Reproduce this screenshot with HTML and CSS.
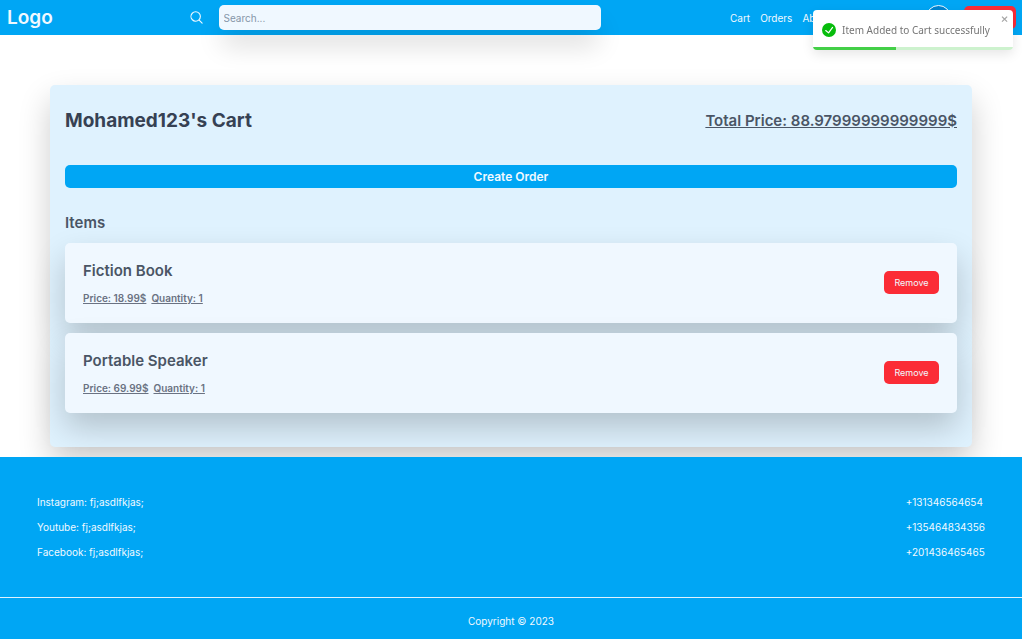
FILE: index.html
```html
<!DOCTYPE html>
<html lang="en">
<head>
<meta charset="utf-8">
<title>Cart</title>
<link rel="stylesheet" href="styles.css">
</head>
<body>
<header class="navbar">
  <a class="logo" href="#">Logo</a>
  <form class="search">
    <label class="search-label" for="search" aria-label="Search">
      <svg class="search-icon" viewBox="0 0 24 24" fill="none" stroke="currentColor" stroke-width="1.8" stroke-linecap="round" stroke-linejoin="round"><path d="M21 21l-5.2-5.2m0 0A7.5 7.5 0 1 0 5.200 5.200a7.500 7.500 0 0 0 10.600 10.600z"/></svg>
    </label>
    <input class="search-input" id="search" type="text" placeholder="Search...">
  </form>
  <nav class="nav">
    <div class="links">
      <a href="#">Cart</a>
      <a href="#">Orders</a>
      <a href="#">About</a>
    </div>
    <span class="avatar"></span>
    <button class="btn logout" type="button" aria-label="Log out"></button>
  </nav>
</header>
<main class="cart">
  <div class="cart-head">
    <h1 class="title">Mohamed123's Cart</h1>
    <p class="total">Total Price: 88.97999999999999$</p>
  </div>
  <button class="create" type="button">Create Order</button>
  <h2 class="subtitle">Items</h2>
  <ul class="items">
    <li class="item">
      <div>
        <h3 class="item-name">Fiction Book</h3>
        <p class="meta"><span>Price: 18.99$</span><span>Quantity: 1</span></p>
      </div>
      <button class="btn" type="button">Remove</button>
    </li>
    <li class="item">
      <div>
        <h3 class="item-name">Portable Speaker</h3>
        <p class="meta"><span>Price: 69.99$</span><span>Quantity: 1</span></p>
      </div>
      <button class="btn" type="button">Remove</button>
    </li>
  </ul>
</main>
<footer class="footer">
  <div class="contacts">
    <ul class="contact-list">
      <li>Instagram: fj;asdlfkjas;</li>
      <li>Youtube: fj;asdlfkjas;</li>
      <li>Facebook: fj;asdlfkjas;</li>
    </ul>
    <ul class="contact-list">
      <li>+131346564654</li>
      <li>+135464834356</li>
      <li>+201436465465</li>
    </ul>
  </div>
  <p class="copyright">Copyright © 2023</p>
</footer>
<div class="toast" role="alert">
  <svg class="toast-icon" viewBox="0 0 24 24"><path fill="#07bc0c" d="M12 0a12 12 0 1 0 12 12A12.014 12.014 0 0 0 12 0zm6.927 8.200l-6.845 9.289a1.011 1.011 0 0 1-1.430.188l-4.888-3.908a1 1 0 1 1 1.250-1.562l4.076 3.261 6.227-8.451a1 1 0 1 1 1.610 1.183z"/></svg>
  <span class="toast-text">Item Added to Cart successfully</span>
  <button class="toast-close" type="button" aria-label="Close"><svg viewBox="0 0 14 16"><path fill="currentColor" fill-rule="evenodd" d="M7.710 8.230l3.750 3.750-1.480 1.480-3.750-3.750-3.750 3.750L1 11.980l3.750-3.750L1 4.480 2.480 3l3.750 3.750L9.980 3l1.480 1.480-3.750 3.750z"/></svg></button>
  <div class="toast-progress"></div>
</div>
</body>
</html>
```

FILE: styles.css
```css
* {
  box-sizing: border-box;
  margin: 0;
  padding: 0;
}

body {
  font-family: Inter, "Liberation Sans", sans-serif;
  font-size: 10px;
  line-height: 15px;
  color: #4a5565;
  background: #fff;
}

a {
  color: inherit;
  text-decoration: none;
}

ul {
  list-style: none;
}

button {
  border: 0;
  font-family: inherit;
  cursor: pointer;
}

.navbar {
  display: flex;
  align-items: center;
  justify-content: space-between;
  height: 35px;
  padding: 0 6px 0 7px;
  background: #00a6f4;
  color: #f0f9ff;
}

.logo {
  width: 52px;
  font-size: 19px;
  line-height: 25px;
  font-weight: 600;
}

.search {
  display: flex;
  align-items: center;
  gap: 15px;
  width: 412px;
  max-width: 41%;
}

.search-icon {
  display: block;
  width: 15px;
  height: 15px;
}

.search-input {
  flex: 1;
  min-width: 0;
  height: 25px;
  padding: 0 5px;
  border: 0;
  border-radius: 5px;
  background: #f0f8ff;
  color: #4a5565;
  font-family: inherit;
  font-size: 10px;
  box-shadow: 0 18px 26px -3px rgba(0, 0, 0, .15);
}

.search-input::placeholder {
  color: #8696a8;
}

.nav {
  display: flex;
  align-items: center;
  width: 286px;
}

.links {
  display: flex;
  gap: 10px;
  flex: 1;
  padding-top: 2px;
}

.avatar {
  width: 25px;
  height: 25px;
  margin-right: 13px;
  border: 1px solid #f0f9ff;
  border-radius: 50%;
  background: #0084d1;
}

.btn {
  height: 23px;
  padding: 0 10px;
  border-radius: 5px;
  background: #fb2c36;
  color: #f0f9ff;
  font-size: 9px;
  line-height: 13px;
  min-width: 55px;
}

.logout {
  min-width: 52px;
}

.cart {
  margin: 50px 50px 10px;
  padding: 20px 15px 34px;
  border-radius: 5px;
  background: #dff2fe;
  box-shadow: 0 15px 32px rgba(0, 0, 0, .2);
}

.cart-head {
  display: flex;
  align-items: center;
  justify-content: space-between;
  margin-bottom: 28px;
}

.title {
  font-size: 19px;
  line-height: 32px;
  font-weight: 700;
  color: #364153;
}

.total {
  font-size: 15px;
  line-height: 20px;
  font-weight: 600;
  text-decoration: underline;
}

.create {
  display: block;
  width: 100%;
  height: 23px;
  border-radius: 5px;
  background: #00a6f4;
  color: #f0f9ff;
  font-size: 12px;
  font-weight: 600;
}

.subtitle {
  margin: 25px 0 10px;
  font-size: 15px;
  line-height: 20px;
  font-weight: 600;
}

.items {
  display: grid;
  gap: 10px;
}

.item {
  display: flex;
  align-items: center;
  justify-content: space-between;
  padding: 18px 18px 17px;
  border-radius: 5px;
  background: #f0f8ff;
  box-shadow: 0 15px 32px rgba(0, 0, 0, .2);
}

.item .btn {
  margin-bottom: 2px;
}

.item-name {
  margin-bottom: 10px;
  font-size: 15px;
  line-height: 20px;
  font-weight: 600;
}

.meta {
  display: flex;
  gap: 5px;
  font-weight: 600;
  color: #6a7282;
  text-decoration: underline;
}

.footer {
  position: relative;
  background: #00a6f4;
  color: #f0f9ff;
}

.contacts {
  display: flex;
  justify-content: space-between;
  padding: 38px 37px 37px;
  border-bottom: 1px solid #dff2fe;
}

.contact-list {
  display: grid;
  gap: 10px;
}

.copyright {
  padding: 16px 0 11px;
  text-align: center;
}

.toast {
  position: fixed;
  top: 10px;
  right: 9px;
  display: flex;
  align-items: center;
  gap: 6px;
  width: 200px;
  height: 40px;
  padding: 0 9px;
  overflow: hidden;
  border-radius: 4px;
  background: #fff;
  color: #757575;
  font-family: "Noto Sans", sans-serif;
  box-shadow: 0 4px 12px rgba(0, 0, 0, .1);
}

.toast-icon {
  width: 14px;
  height: 14px;
}

.toast-close {
  position: absolute;
  top: 4px;
  right: 4px;
  width: 8px;
  height: 10px;
  background: transparent;
  color: #a6a6a6;
}

.toast-close svg {
  display: block;
  width: 8px;
  height: 10px;
}

.toast-progress {
  position: absolute;
  left: 0;
  bottom: 0;
  width: 100%;
  height: 3px;
  background: linear-gradient(to right, #43cf47 83px, #cdf2ce 83px);
}
```
